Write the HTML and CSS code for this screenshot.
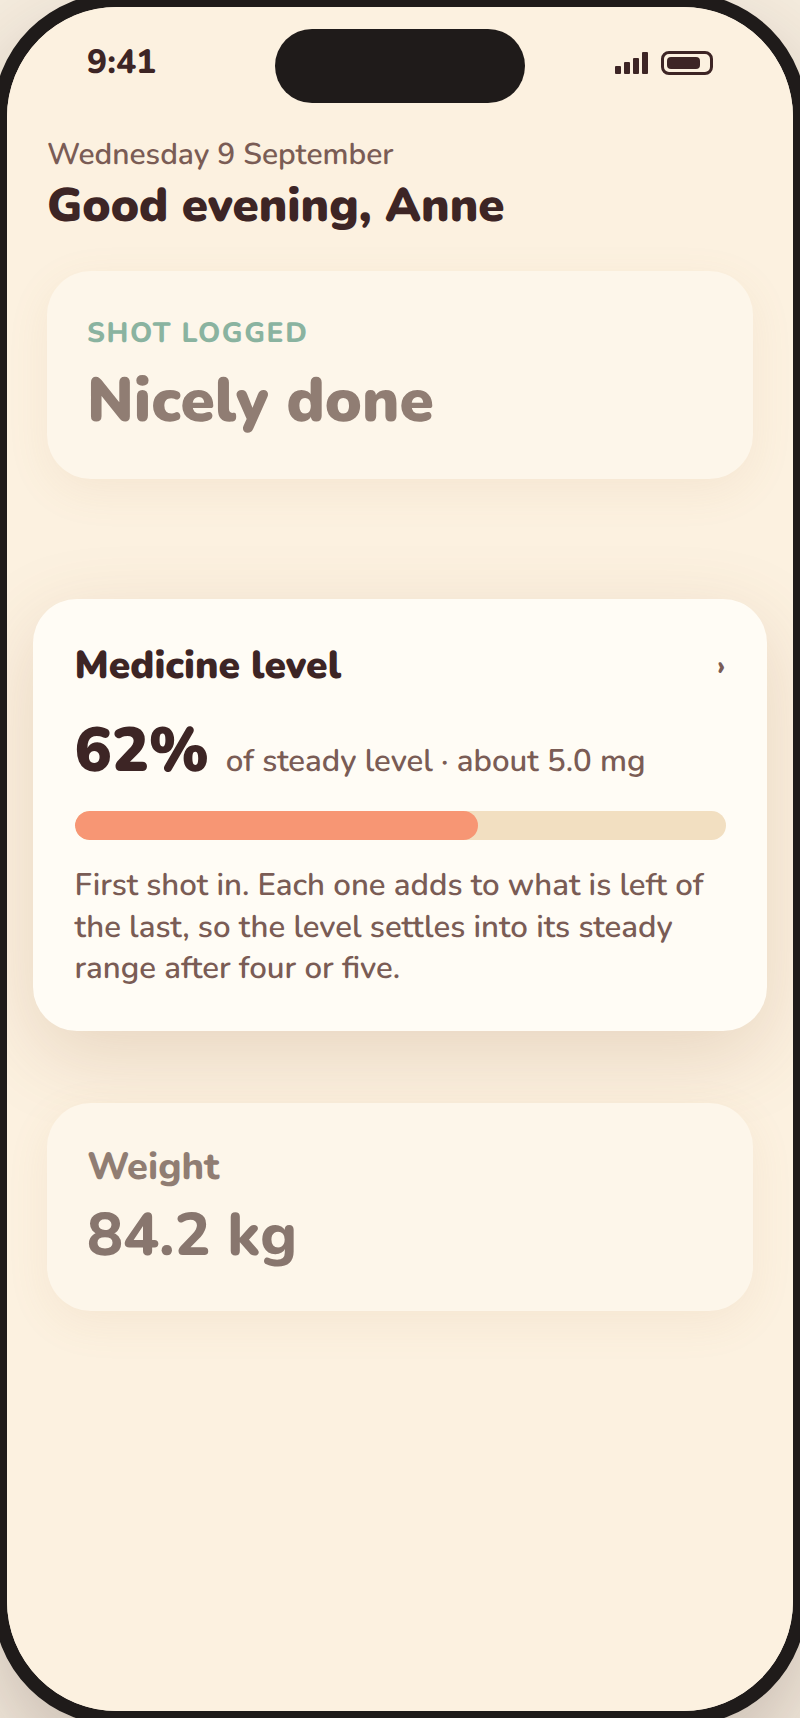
FILE: index.html
```html
<!DOCTYPE html>
<html lang="en">

<head>
    <meta charset="UTF-8">
    <meta name="viewport" content="width=device-width, initial-scale=1.0">
    <title>Today</title>
    <link rel="stylesheet" href="styles.css">
</head>

<body>
    <div class="phone">
        <div class="screen">
            <div class="status-bar">
                <span class="time">9:41</span>
                <div class="island"></div>
                <div class="status-icons">
                    <svg class="signal" width="33" height="22" viewBox="0 0 33 22" fill="#3d2525">
                        <rect x="0" y="14" width="6" height="8" rx="1"/>
                        <rect x="9" y="10" width="6" height="12" rx="1"/>
                        <rect x="18" y="6" width="6" height="16" rx="1"/>
                        <rect x="27" y="0" width="6" height="22" rx="1"/>
                    </svg>
                    <div class="battery"><div class="battery-fill"></div></div>
                </div>
            </div>

            <header class="greeting">
                <p class="date">Wednesday 9 September</p>
                <h1>Good evening, Anne</h1>
            </header>

            <section class="card card-dim card-logged">
                <p class="eyebrow">SHOT LOGGED</p>
                <p class="big-line">Nicely done</p>
            </section>

            <section class="card card-level">
                <div class="level-head">
                    <h2>Medicine level</h2>
                    <span class="chevron">›</span>
                </div>
                <div class="level-value">
                    <span class="percent">62%</span>
                    <span class="level-note">of steady level · about 5.0 mg</span>
                </div>
                <div class="bar"><div class="bar-fill" style="width: 62%"></div></div>
                <p class="level-text">First shot in. Each one adds to what is left of the last, so the level settles into its steady range after four or five.</p>
            </section>

            <section class="card card-dim card-weight">
                <p class="weight-label">Weight</p>
                <p class="weight-value">84.2 kg</p>
            </section>
        </div>
    </div>
</body>

</html>
```

FILE: styles.css
```css
/* Basic reset */
* {
    margin: 0;
    padding: 0;
    box-sizing: border-box;
}

body {
    width: 800px;
    height: 1718px;
    overflow: hidden;
    background-color: #f5ecde;
    font-family: "Nunito", "Noto Sans", sans-serif;
    color: #3d2525;
    text-rendering: geometricPrecision;
}

.phone {
    width: 814px;
    height: 1732px;
    margin: -7px;
    border: 14px solid #1f1b1a;
    border-radius: 124px;
    box-shadow: 0 40px 90px rgba(61, 37, 37, 0.24);
}

.screen {
    height: 100%;
    background-color: #fcf1e0;
    border-radius: 110px;
    overflow: hidden;
}

.status-bar {
    height: 128px;
    padding: 22px 80px 0 80px;
    display: flex;
    justify-content: space-between;
    align-items: flex-start;
    position: relative;
}

.time {
    margin-top: 7px;
    font-size: 33.6px;
    font-weight: 800;
    line-height: 52px;
}

.island {
    position: absolute;
    left: 268px;
    top: 22px;
    width: 250px;
    height: 74px;
    border-radius: 37px;
    background-color: #1f1b1a;
}

.status-icons {
    display: flex;
    align-items: center;
    gap: 13px;
    margin-top: 22px;
}

.battery {
    width: 52px;
    height: 24px;
    border: 3px solid #3d2525;
    border-radius: 8px;
    padding: 3px;
}

.battery-fill {
    width: 33px;
    height: 12px;
    border-radius: 4px;
    background-color: #3d2525;
}

.greeting {
    padding: 0 40px;
}

.date {
    margin-top: -2px;
    font-size: 30px;
    font-weight: 600;
    line-height: 44px;
    color: #7a5c55;
}

h1 {
    font-size: 47.2px;
    font-weight: 900;
    line-height: 57px;
}

.card {
    border-radius: 44px;
}

.card-dim {
    margin: 0 40px;
    height: 208px;
    padding: 47px 40px 0;
    background-color: #fdf6ea;
    box-shadow: 0 12px 44px rgba(180, 130, 80, 0.09);
}

.card-logged {
    margin-top: 37px;
}

.eyebrow {
    margin-bottom: 13px;
    font-size: 28px;
    font-weight: 800;
    line-height: 30px;
    letter-spacing: 1.6px;
    color: #8ab3a0;
}

.big-line {
    font-size: 61.8px;
    font-weight: 900;
    line-height: 80px;
    color: #907d73;
}

.card-level {
    margin: 120px 26px 72px;
    height: 432px;
    padding: 45px 41.5px;
    background-color: #fffcf5;
    box-shadow: 0 24px 80px rgba(140, 90, 50, 0.18);
}

.level-head {
    display: flex;
    justify-content: space-between;
    align-items: center;
}

h2 {
    font-size: 38.8px;
    font-weight: 900;
    line-height: 44px;
}

.chevron {
    font-size: 28px;
    font-weight: 800;
    color: #7a5c55;
}

.level-value {
    display: flex;
    align-items: baseline;
    gap: 17px;
    margin-top: 27px;
}

.percent {
    font-size: 62px;
    font-weight: 900;
    line-height: 72px;
}

.level-note {
    font-size: 31.2px;
    font-weight: 600;
    color: #7a5c55;
}

.bar {
    height: 29px;
    margin-top: 24px;
    border-radius: 15px;
    background-color: #f2dfc1;
    overflow: hidden;
}

.bar-fill {
    height: 100%;
    border-radius: 15px;
    background-color: #f79674;
}

.level-text {
    margin-top: 25px;
    font-size: 31.2px;
    font-weight: 600;
    line-height: 41.6px;
    color: #7a5c55;
}

.card-weight {
    padding-top: 43px;
}

.weight-label {
    margin-bottom: 10px;
    font-size: 38px;
    font-weight: 800;
    line-height: 44px;
    color: #907d73;
}

.weight-value {
    font-size: 60px;
    font-weight: 800;
    line-height: 72px;
    color: #88766e;
}
```
